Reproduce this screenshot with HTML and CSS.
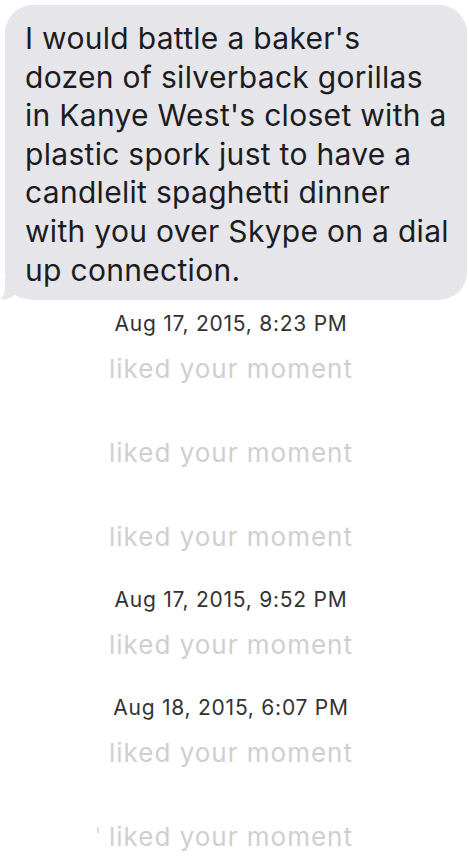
FILE: index.html
```html
<!DOCTYPE html>
<html lang="en">
<head>
  <meta charset="UTF-8">
  <title>Messages</title>
  <link rel="stylesheet" href="styles.css">
</head>
<body>
  <div class="thread">
    <div class="bubble">
      <p class="bubble-text">I would battle a baker's dozen of silverback gorillas in Kanye West's closet with a plastic spork just to have a candlelit spaghetti dinner with you over Skype on a dial up connection.</p>
      <svg class="tail" width="24" height="22" viewBox="0 0 24 22">
        <path d="M5 0 L5 8 C5 15 3 19 0 21.5 C6 21.5 11 20 15 17 C18 19 21 20 24 20 L24 0 Z" fill="#e5e5ea"/>
      </svg>
    </div>

    <div class="stamp">Aug 17, 2015, 8:23 PM</div>
    <div class="liked">liked your moment</div>
    <div class="liked">liked your moment</div>
    <div class="liked">liked your moment</div>

    <div class="stamp">Aug 17, 2015, 9:52 PM</div>
    <div class="liked">liked your moment</div>

    <div class="stamp">Aug 18, 2015, 6:07 PM</div>
    <div class="liked">liked your moment</div>
    <div class="liked"><span class="tick"></span>liked your moment</div>
  </div>
</body>
</html>
```

FILE: styles.css
```css
body { margin: 0; background: #fff; font-family: Inter, "Liberation Sans", sans-serif; }
.thread { padding-top: 5px; }
.bubble { position: relative; margin: 0 2px 0 5px; background: #e5e5ea; border-radius: 28px; padding: 14px 16px 11px 20px; }
.bubble-text { margin: 0; font-size: 30px; line-height: 38.6px; letter-spacing: 0.3px; color: #1c1c1e; }
.tail { position: absolute; left: -5px; bottom: 0; }
.stamp { margin-top: 12px; padding-right: 7px; text-align: center; font-size: 21px; line-height: 24px; letter-spacing: 0.75px; color: #333; }
.liked { padding-right: 7px; text-align: center; font-size: 26px; line-height: 38px; letter-spacing: 1px; color: #cfcfcf; }
.stamp + .liked { margin-top: 14px; }
.liked + .liked { margin-top: 46px; }
.liked + .stamp { margin-top: 32px; }
.tick { display: inline-block; width: 2px; height: 6px; background: #ddd; margin: 0 10px 0 -12px; vertical-align: 13px; }
```
